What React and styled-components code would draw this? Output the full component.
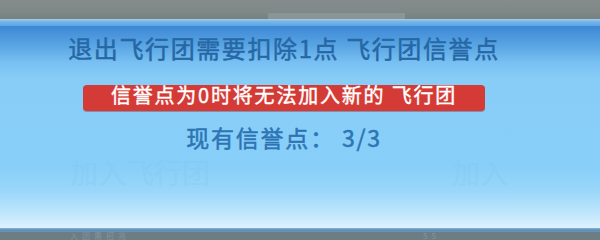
import React from 'react';
import styled, { createGlobalStyle } from 'styled-components';

const GlobalStyle = createGlobalStyle`
  html, body {
    margin: 0;
    padding: 0;
    background: #7b8786;
  }
  body {
    font-family: "Noto Sans CJK SC", "Noto Sans", sans-serif;
  }
`;

const Screen = styled.div`
  width: 600px;
  height: 240px;
  display: flex;
  flex-direction: column;
  overflow: hidden;
`;

const TopBar = styled.div`
  height: 19px;
  display: flex;
  align-items: flex-end;
  padding-left: 268px;
  background: linear-gradient(#858c8b 0%, #7f8988 60%, #74827f 100%);
`;

const TopTab = styled.div`
  width: 137px;
  height: 6px;
  background: #8a9595;
`;

const Rim = styled.div`
  height: 7px;
  background: linear-gradient(#a9cbe6 0%, #79b6ea 35%, #5ca4e4 100%);
`;

const Panel = styled.div`
  height: 202px;
  display: flex;
  flex-direction: column;
  align-items: center;
  padding-right: 32px;
  box-sizing: border-box;
  background: linear-gradient(
    #3d88d4 0%,
    #5aa6e4 10%,
    #78c0f2 18%,
    #87cdf7 26%,
    #88cff9 70%,
    #9ad7fa 82%,
    #c4e8fc 94%,
    #dcf2fd 100%
  );
`;

const Title = styled.div`
  margin-top: 9px;
  font-size: 24px;
  line-height: 26px;
  letter-spacing: 1.6px;
  color: #2667a6;
  -webkit-text-stroke: 0.5px #2667a6;
  white-space: nowrap;
`;

const Warning = styled.div`
  margin-top: 24px;
  width: 402px;
  height: 26px;
  box-sizing: border-box;
  border-radius: 4px;
  background: #d43b36;
  color: #fff;
  text-align: center;
  font-size: 20px;
  line-height: 20px;
  letter-spacing: 1.8px;
  -webkit-text-stroke: 0.4px #fff;
  white-space: nowrap;
  box-shadow: 0 1px 0 rgba(120, 30, 30, 0.35);
`;

const Points = styled.div`
  margin-top: 14px;
  font-size: 23px;
  line-height: 24px;
  letter-spacing: 1.8px;
  color: #2d74b4;
  -webkit-text-stroke: 0.5px #2d74b4;
  white-space: nowrap;
`;

const GhostRow = styled.div`
  align-self: stretch;
  display: flex;
  justify-content: space-between;
  padding: 8px 60px 0 70px;
  font-size: 28px;
  line-height: 30px;
  color: #7fc5f1;
  opacity: 0.25;
`;

const Edge = styled.div`
  height: 4px;
  background: linear-gradient(#8fb7d4 0%, #5a8fba 50%, #6a96b8 100%);
`;

const Footer = styled.div`
  flex: 1;
  display: flex;
  justify-content: space-between;
  padding: 0 160px 0 70px;
  background: #6c7d84;
  color: #84949a;
  font-size: 8px;
  line-height: 8px;
  letter-spacing: 4px;
`;

export default function App() {
  return (
    <>
      <GlobalStyle />
      <Screen>
        <TopBar>
          <TopTab />
        </TopBar>
        <Rim />
        <Panel>
          <Title>退出飞行团需要扣除1点 飞行团信誉点</Title>
          <Warning>信誉点为0时将无法加入新的 飞行团</Warning>
          <Points>现有信誉点：&nbsp;3/3</Points>
          <GhostRow>
            <span>加入飞行团</span>
            <span>加入</span>
          </GhostRow>
        </Panel>
        <Edge />
        <Footer>
          <span>入团需招兆</span>
          <span>55</span>
        </Footer>
      </Screen>
    </>
  );
}
